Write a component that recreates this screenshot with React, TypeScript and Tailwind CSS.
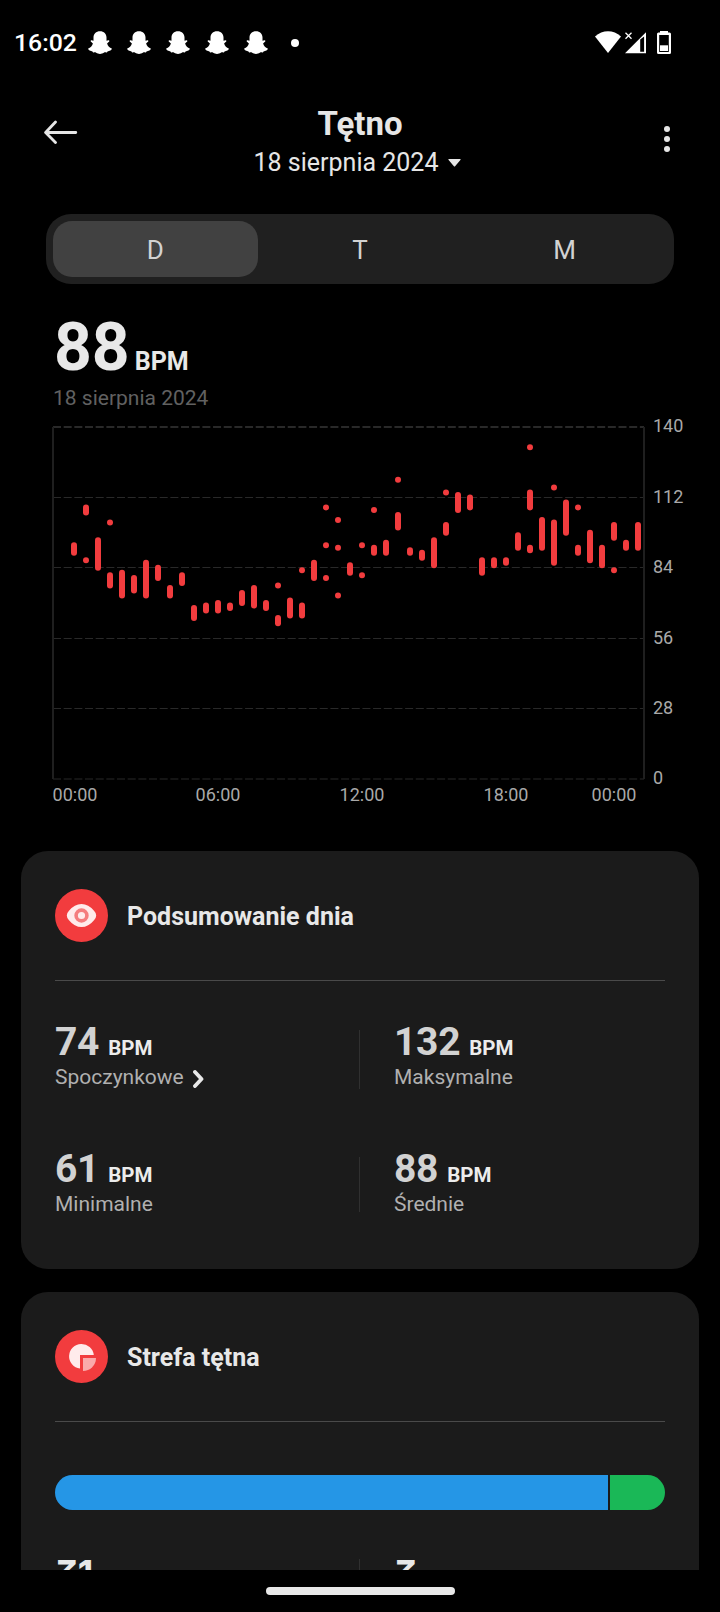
import React, { useState } from 'react';

type Range = [low: number, high: number];

// One entry for each half hour, each with its BPM ranges
const samples: Range[][] = [
  [[90, 93]],
  [[106, 108], [87, 87]],
  [[84, 95]],
  [[102, 102], [77, 81]],
  [[73, 82]],
  [[75, 80]],
  [[73, 86]],
  [[80, 84]],
  [[73, 76]],
  [[78, 81]],
  [[64, 68]],
  [[67, 69]],
  [[67, 70]],
  [[68, 69]],
  [[70, 74]],
  [[69, 76]],
  [[68, 70]],
  [[77, 77], [62, 64]],
  [[65, 71]],
  [[83, 83], [65, 69]],
  [[80, 86]],
  [[108, 108], [93, 93], [80, 80]],
  [[103, 103], [92, 92], [73, 73]],
  [[82, 85]],
  [[93, 93], [81, 81]],
  [[107, 107], [90, 92]],
  [[90, 94]],
  [[119, 119], [100, 105]],
  [[90, 91]],
  [[88, 90]],
  [[85, 95]],
  [[114, 114], [98, 101]],
  [[107, 113]],
  [[108, 112]],
  [[82, 87]],
  [[85, 87]],
  [[86, 87]],
  [[92, 97]],
  [[132, 132], [108, 114], [91, 92]],
  [[92, 103]],
  [[116, 116], [86, 102]],
  [[98, 110]],
  [[108, 108], [90, 92]],
  [[87, 98]],
  [[85, 92]],
  [[96, 101], [83, 83]],
  [[92, 94]],
  [[92, 101]]
];

const yTicks = [140, 112, 84, 56, 28, 0];

const xTicks = [
  { label: '00:00', x: 23 },
  { label: '06:00', x: 166 },
  { label: '12:00', x: 310 },
  { label: '18:00', x: 454 },
  { label: '00:00', x: 562 }
];

const tabs = ['D', 'T', 'M'];

const yFor = (bpm: number) => 362 - bpm * 2.514;

const GhostIcon = () => (
  <svg width="24" height="24" viewBox="0 0 24 24" fill="white">
    <path d="M12 .2c3.900 0 6.500 2.600 6.500 6.400v3.100c1-.1 2.300-.7 2.800 0 .6 1-1.800 2-2.200 2.900.7 2.400 2.500 4.300 4.700 5 .3 1.600-2.300 2.400-4.300 2.800-.4.800-.4 1-1.200 1-1.100-.1-1.700-.1-2.500.3-1.200.7-2.300 1.200-3.800 1.200s-2.600-.5-3.800-1.200c-.8-.4-1.400-.4-2.500-.3-.8 0-.8-.2-1.200-1-2-.4-4.600-1.200-4.300-2.800 2.200-.7 4-2.600 4.700-5-.4-.9-2.800-1.900-2.200-2.900.5-.7 1.800-.1 2.800 0V6.600C5.500 2.800 8.100.2 12 .2z" />
  </svg>
);

const StatusBar = () => (
  <div className="flex h-[85px] items-center pl-[14px] pr-[49px] text-white">
    <span className="w-[74px] pt-px text-[24.800px] font-medium leading-none">16:02</span>
    <div className="flex gap-[15px]">
      {[...Array(5)].map((_, i) => (
        <GhostIcon key={i} />
      ))}
    </div>
    <span className="ml-[23px] size-2 rounded-full bg-white" />
    <div className="ml-auto flex items-center">
      <svg width="76" height="24" viewBox="0 0 76 24" fill="white">
        <path d="M0 5.500C7.500-1.600 18.500-1.600 26 5.500L13 22z" />
        <path fillRule="evenodd" d="M30 22.300L51 1.300v21zM45.200 8.600v12.200h3.900V5.500z" />
        <path d="M30.500 1.700l6 6m0-6l-6 6" stroke="white" strokeWidth="1.300" />
        <path fillRule="evenodd" d="M65 0h8v1.500h1.500q1.500 0 1.500 1.500v18.500q0 1.500-1.500 1.500h-11q-1.500 0-1.500-1.500V3q0-1.500 1.500-1.500H65zM64.200 4v17h9.600V4z" />
        <path d="M65 14.300h8v5.700h-8z" />
      </svg>
    </div>
  </div>
);

const Header = () => (
  <header className="flex h-[129px] justify-between pl-11 pr-[50px] text-[#e6e6e6]">
    <button className="mt-[35px] h-[26px] w-9">
      <svg width="34" height="26" viewBox="0 0 34 26" fill="none" stroke="currentColor" strokeWidth="2.800" strokeLinecap="round" strokeLinejoin="round">
        <path d="M11.500 2L1.600 12.500l9.900 10M2 12.500h29.800" />
      </svg>
    </button>
    <div className="flex flex-col items-center pl-px pt-[19px]">
      <h1 className="pl-[5px] text-[33px] font-bold leading-10">Tętno</h1>
      <div className="flex items-center gap-[10px] pt-px">
        <span className="text-[25px] leading-9">18 sierpnia 2024</span>
        <svg width="13" height="8" viewBox="0 0 13 8" fill="currentColor">
          <path d="M1 0h11q1.200 0 .4 1L7.300 7q-.8 1-1.600 0L.6 1Q-.2 0 1 0z" />
        </svg>
      </div>
    </div>
    <button className="mt-[41px] flex h-[26px] w-9 flex-col items-end gap-1">
      {[...Array(3)].map((_, i) => (
        <span key={i} className="size-[6px] shrink-0 rounded-full bg-[#e6e6e6]" />
      ))}
    </button>
  </header>
);

const HeartChart = () => (
  <svg width="668" height="400" viewBox="0 0 668 400" className="block overflow-visible font-[Roboto,sans-serif]">
    <g stroke="#292929" strokeDasharray="8 2.670">
      {yTicks.map(tick => (
        <line
          key={tick}
          x1="1"
          x2="592"
          y1={Math.floor(yFor(tick)) + (tick % 140 === 0 ? 0 : 0.5)}
          y2={Math.floor(yFor(tick)) + (tick % 140 === 0 ? 0 : 0.5)}
          strokeWidth={tick === 140 ? 2 : 1.2}
        />
      ))}
    </g>
    <path d="M1 10v352M592 10v352" stroke="#1f1f1f" strokeWidth="2" />
    <g stroke="#f23c3e" strokeWidth="6" strokeLinecap="round">
      {samples.map((ranges, i) =>
        ranges.map(([low, high]) => (
          <line key={`${i}-${low}`} x1={22 + i * 12} x2={22 + i * 12} y1={yFor(high)} y2={yFor(low)} />
        ))
      )}
    </g>
    <g fill="#a9a9a9" fontSize="18">
      {yTicks.map(tick => (
        <text key={tick} x="601" y={yFor(tick) + 5.3}>{tick}</text>
      ))}
      {xTicks.map(({ label, x }) => (
        <text key={x} x={x} y="384" textAnchor="middle">{label}</text>
      ))}
    </g>
  </svg>
);

interface CardHeaderProps {
  title: string;
  children: React.ReactNode;
}

const CardHeader: React.FC<CardHeaderProps> = ({ title, children }) => (
  <div className="flex h-[130px] items-start gap-[19px] border-b border-[#4a4a4a] pt-[38px]">
    <svg width="53" height="53" viewBox="0 0 53 53">
      <circle cx="26.500" cy="26.500" r="26.500" fill="#f23c3e" />
      {children}
    </svg>
    <h2 className="text-[25px] font-bold leading-[56px] text-[#e8e8e8]">{title}</h2>
  </div>
);

interface StatProps {
  value: number;
  label: string;
  link?: boolean;
}

const Stat: React.FC<StatProps> = ({ value, label, link }) => (
  <div>
    <div className="flex h-11 items-baseline gap-[9px]">
      <span className="text-[39px] font-bold leading-[44px] tracking-[-0.3px] text-[#d2d2d2]">{value}</span>
      <span className="text-[20.500px] font-bold leading-none text-[#ececec]">BPM</span>
    </div>
    <div className="flex items-center gap-[9px] text-[21px] leading-[26px] text-[#b0b0b0]">
      {label}
      {link && (
        <svg width="11" height="18" viewBox="0 0 11 18" fill="none" stroke="#e8e8e8" strokeWidth="3.800" className="mt-[4px]">
          <path d="M2 2l6.500 7L2 16" strokeLinecap="round" strokeLinejoin="round" />
        </svg>
      )}
    </div>
  </div>
);

const ZoneTime = ({ minutes }: { minutes: number }) => (
  <div className="flex h-11 items-baseline gap-2 text-[#e8e8e8]">
    <span className="font-[Inter,sans-serif] text-[36px] font-bold leading-[44px] tracking-[-0.5px] [font-feature-settings:'cv09']">{minutes}</span>
    <span className="text-[22px] leading-none text-[#b0b0b0]">min</span>
  </div>
);

export default function App() {
  const [activeTab, setActiveTab] = useState('D');

  return (
    <div className="flex h-[1612px] w-[720px] flex-col overflow-hidden bg-black font-[Roboto,sans-serif]">
      <StatusBar />
      <Header />

      <div className="mx-[46px] flex h-[70px] shrink-0 rounded-[25px] bg-[#202020] p-[7px]">
        {tabs.map(tab => (
          <button
            key={tab}
            onClick={() => setActiveTab(tab)}
            className={`flex-1 rounded-[19px] pt-[2px] text-[26px] text-[#d2d2d2] ${activeTab === tab ? 'bg-[#414141]' : ''}`}
          >
            {tab}
          </button>
        ))}
      </div>

      <section className="h-[567px] shrink-0 pl-[52px]">
        <div className="flex h-[101px] items-baseline gap-[5px] pl-[2px] pt-[25px] text-[#e8e8e8]">
          <span className="text-[66px] font-bold leading-[78px]">88</span>
          <span className="text-[25px] font-bold">BPM</span>
        </div>
        <div className="h-8 pl-px text-[21px] leading-[26px] text-[#616161]">18 sierpnia 2024</div>
        <HeartChart />
      </section>

      <main className="flex h-[719px] shrink-0 flex-col gap-[23px] overflow-hidden px-[21px]">
        <section className="h-[418px] shrink-0 rounded-[27px] bg-[#1b1b1b] px-[34px]">
          <CardHeader title="Podsumowanie dnia">
            <path d="M11.800 26.500Q11.800 24 14 21.800Q19.500 15 26.500 15T39 21.800Q41.200 24 41.200 26.500T39 31.200Q33.500 38 26.500 38T14 31.200Q11.800 29 11.800 26.500z" fill="#ffebeb" />
            <circle cx="26.500" cy="26.500" r="5.400" fill="#ffebeb" stroke="#f57d7e" strokeWidth="3.600" />
          </CardHeader>
          <div className="grid grid-cols-[304px_1fr] gap-y-[57px] pt-[39px]">
            <Stat value={74} label="Spoczynkowe" link />
            <div className="flex">
              <span className="mt-[10px] h-[59px] w-px bg-[#303030]" />
              <div className="pl-[34px]"><Stat value={132} label="Maksymalne" /></div>
            </div>
            <Stat value={61} label="Minimalne" />
            <div className="flex">
              <span className="mt-[10px] h-[55px] w-px bg-[#303030]" />
              <div className="pl-[34px]"><Stat value={88} label="Średnie" /></div>
            </div>
          </div>
        </section>

        <section className="h-[418px] shrink-0 rounded-t-[27px] bg-[#1b1b1b] px-[34px]">
          <CardHeader title="Strefa tętna">
            <path d="M25 38.600A12.400 12.400 0 1 1 38.800 25H25z" fill="#ffebeb" />
            <path d="M28 28h13a13 13 0 0 1-13 13z" fill="#faaaab" />
          </CardHeader>
          <div className="mt-[53px] flex h-[35px] gap-[2px] overflow-hidden rounded-full">
            <div className="w-[553px] bg-[#2596e6]" />
            <div className="flex-1 bg-[#1ab857]" />
          </div>
          <div className="grid grid-cols-[304px_1fr] pt-[41px]">
            <ZoneTime minutes={31} />
            <div className="flex">
              <span className="mt-2 h-[55px] w-px bg-[#303030]" />
              <div className="pl-[34px]"><ZoneTime minutes={3} /></div>
            </div>
          </div>
        </section>
      </main>

      <footer className="flex h-[42px] shrink-0 items-center justify-center">
        <div className="h-2 w-[189px] rounded-full bg-[#e8e8e8]" />
      </footer>
    </div>
  );
}
